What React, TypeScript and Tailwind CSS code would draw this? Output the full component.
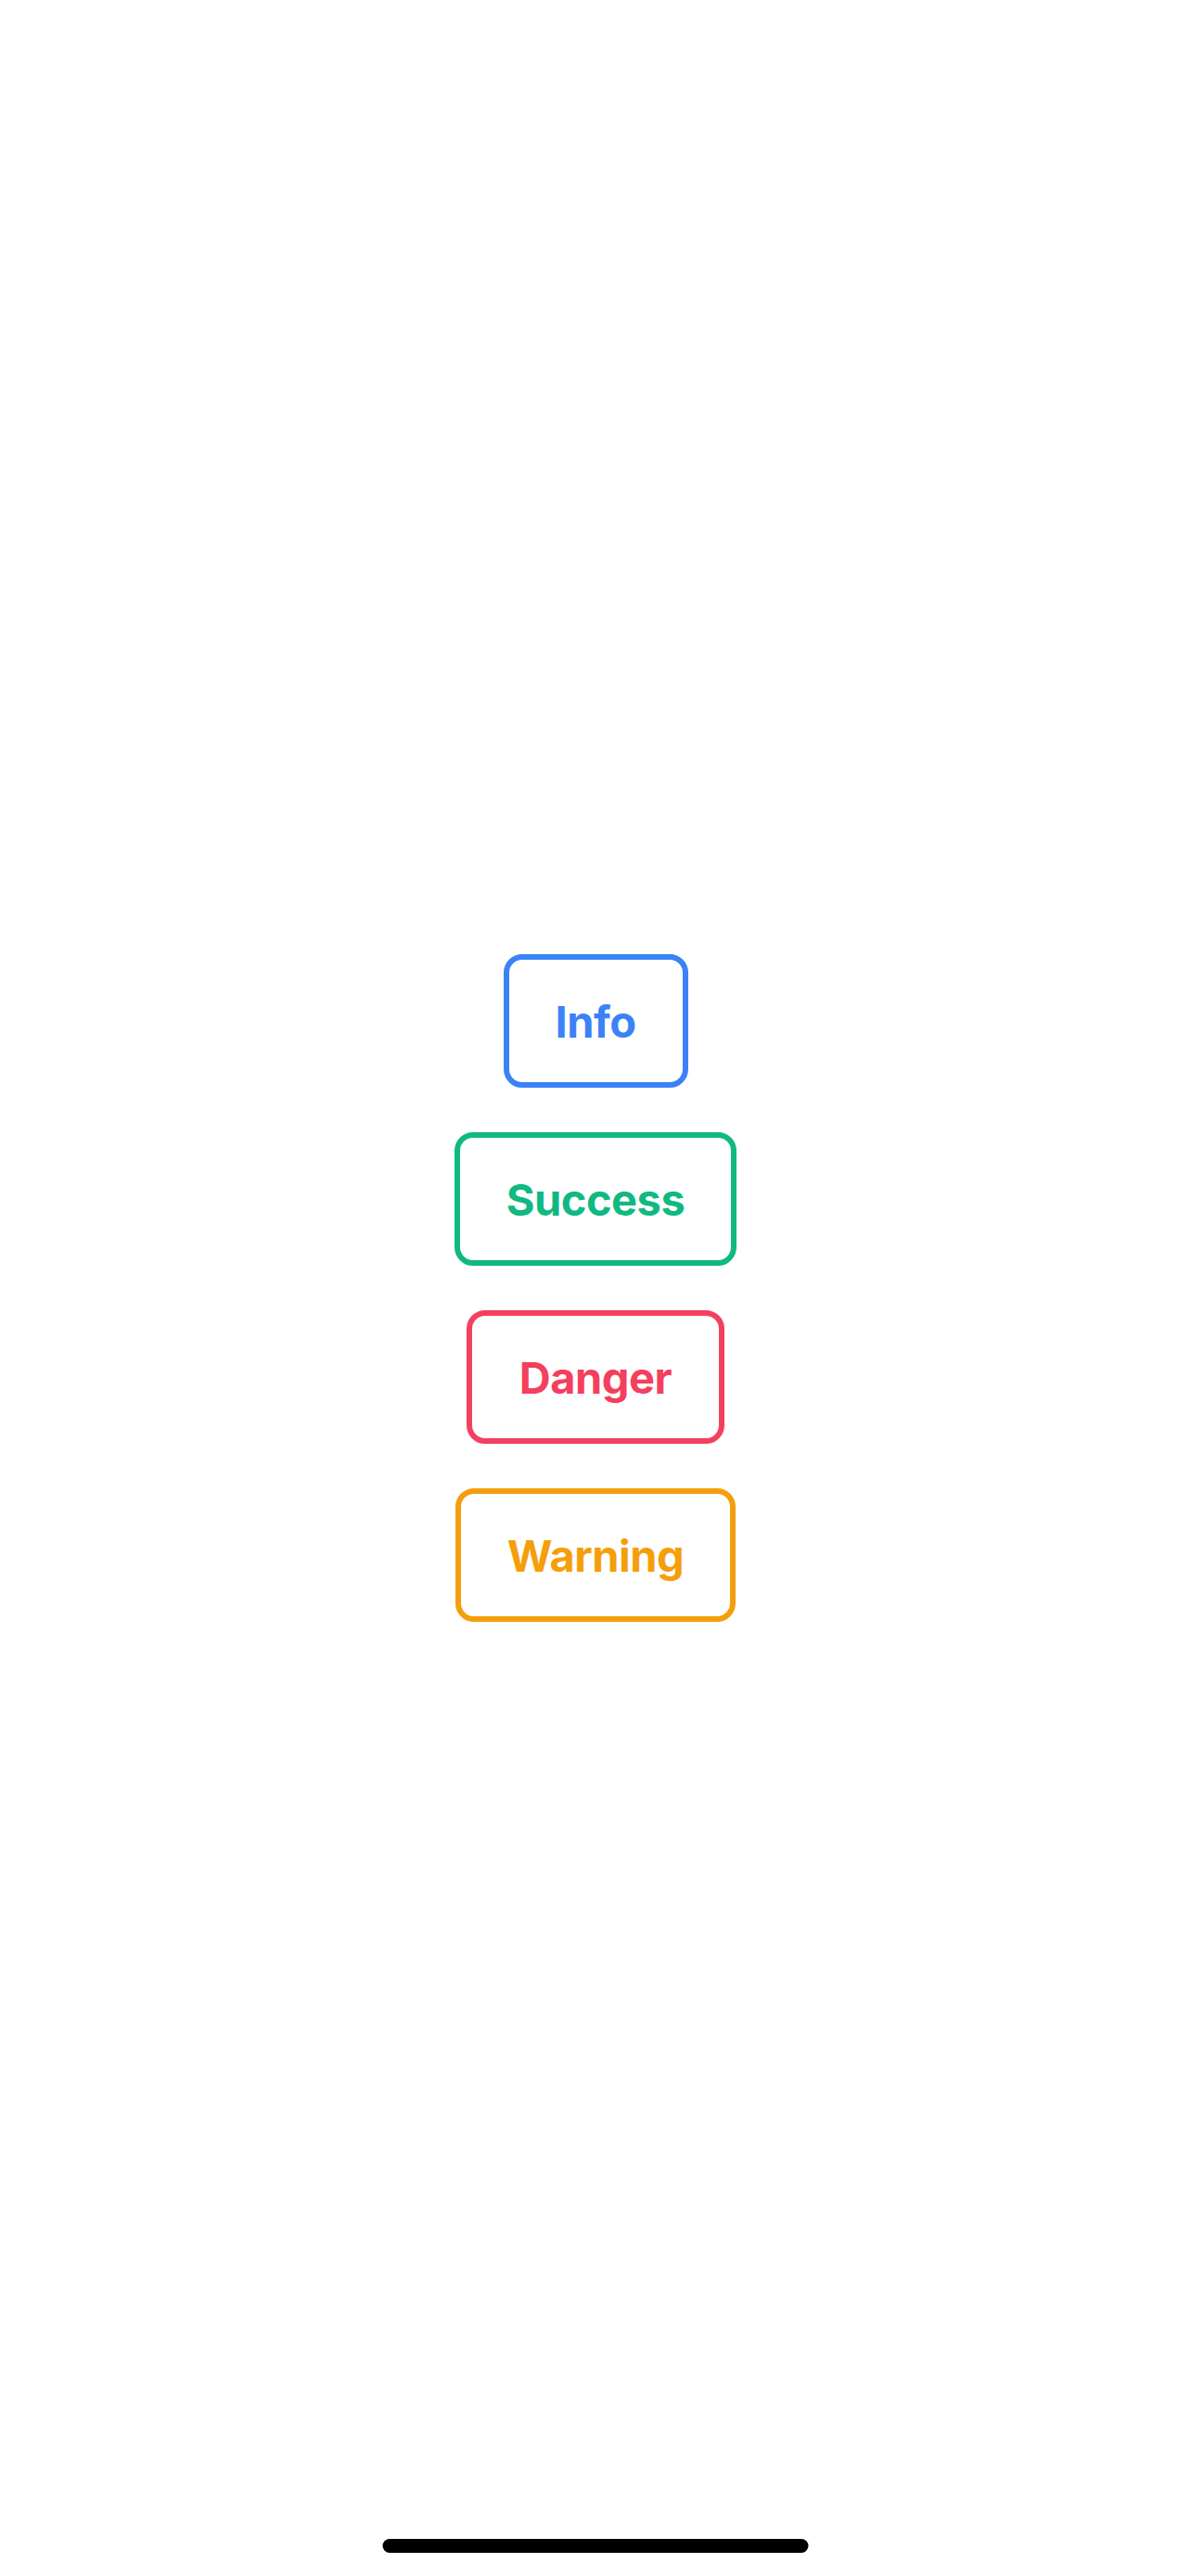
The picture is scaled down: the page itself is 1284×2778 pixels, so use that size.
import React from "react";

const buttons = [
  { label: "Info", cls: "w-[199px] border-[#3B82F6] text-[#3B82F6]" },
  { label: "Success", cls: "w-[304px] border-[#10B981] text-[#10B981]" },
  { label: "Danger", cls: "w-[278px] border-[#F43F5E] text-[#F43F5E]" },
  { label: "Warning", cls: "w-[302px] border-[#F59E0B] text-[#F59E0B]" },
];

export default function App() {
  return (
    <div
      className="relative flex h-screen w-full flex-col items-center justify-center gap-[48px] bg-white"
      style={{ fontFamily: 'Inter, "Noto Sans", sans-serif' }}
    >
      {buttons.map((b) => (
        <button
          key={b.label}
          className={`flex h-[144px] items-center justify-center rounded-[20px] border-[6px] bg-white text-[47px] font-bold leading-none tracking-[-0.5px] ${b.cls}`}
        >
          {b.label}
        </button>
      ))}
      <div className="absolute bottom-[25px] left-1/2 h-[15px] w-[459px] -translate-x-1/2 rounded-full bg-black" />
    </div>
  );
}
